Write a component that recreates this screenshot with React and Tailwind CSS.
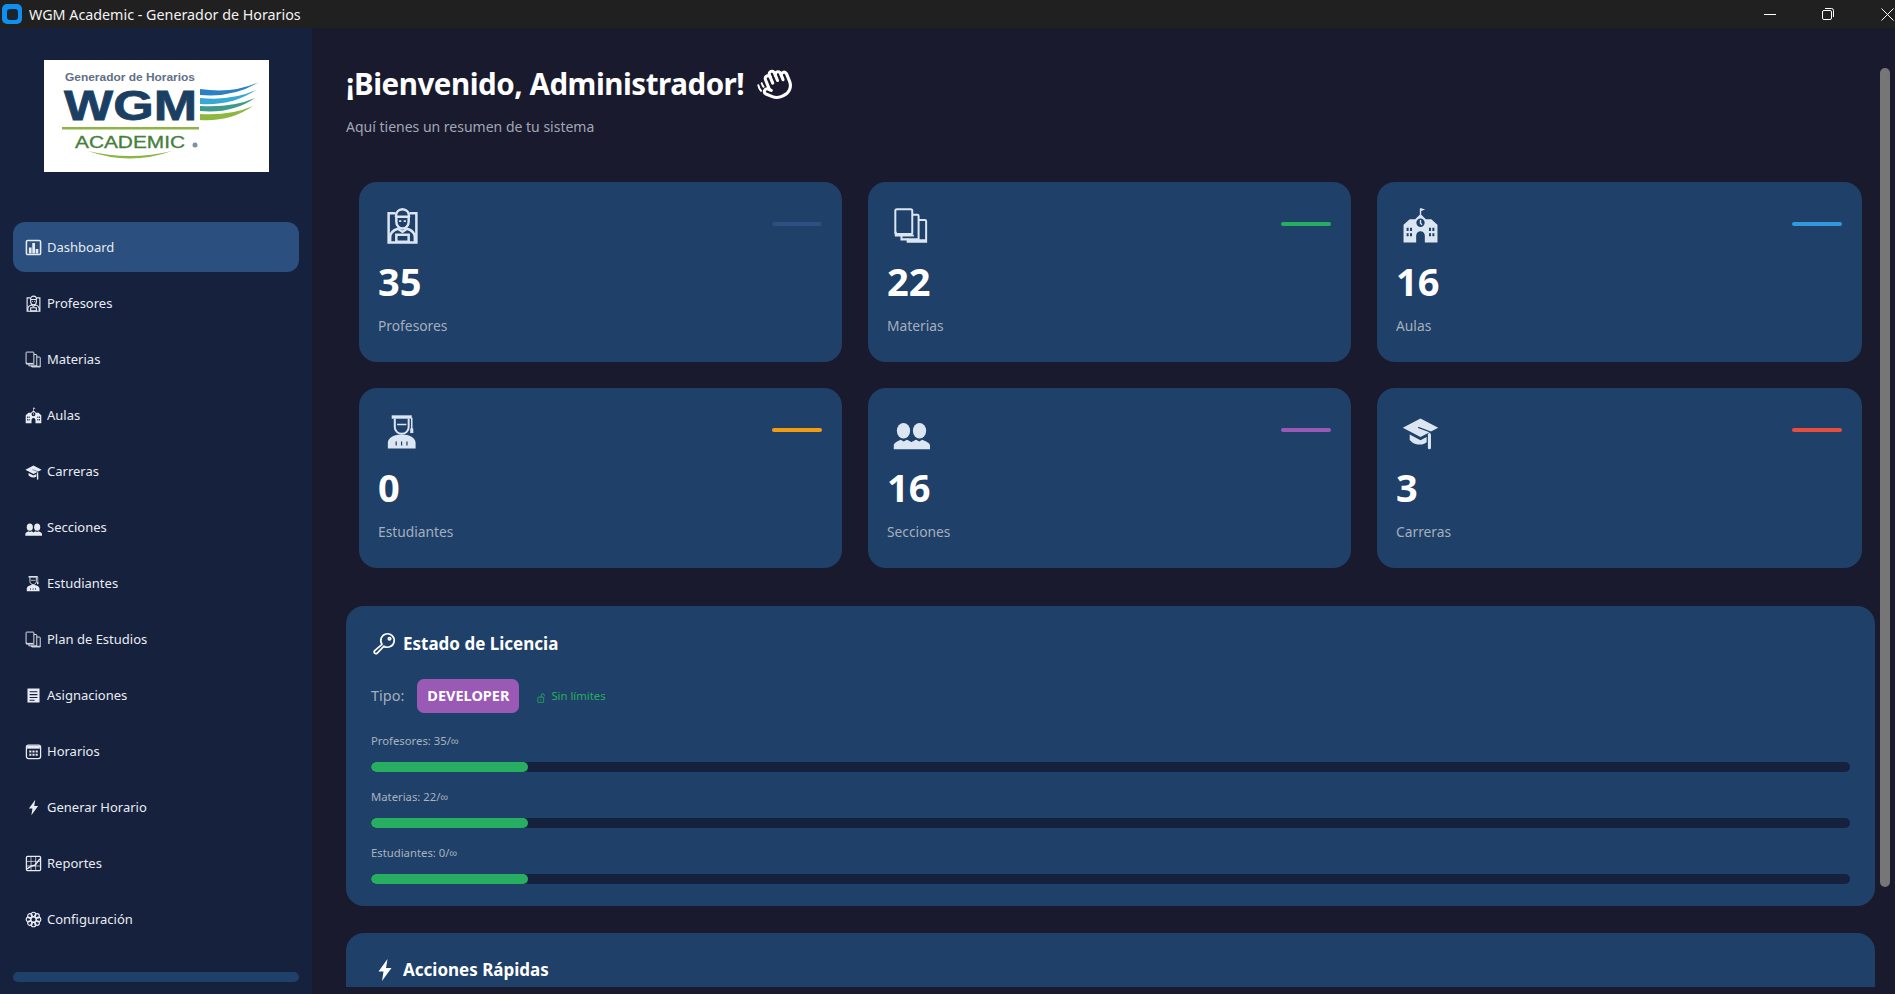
import React from 'react';

const Svg = ({ className, children }) => (
  <svg viewBox="0 0 24 24" fill="none" stroke="none" className={className}>{children}</svg>
);

const ChartIcon = ({ className }) => (
  <Svg className={className}>
    <rect x="2" y="2" width="20" height="20" rx="2" stroke="currentColor" strokeWidth="2.200" />
    <path fill="currentColor" d="M5.500 12h3.800v8.500H5.500zM10.300 5.500h3.800v15h-3.800zM15 14h3.800v6.500H15z" />
  </Svg>
);

const TeacherIcon = ({ className }) => (
  <Svg className={className}>
    <g stroke="currentColor" strokeWidth="1.600">
      <path d="M7.500 4H3v19h18V4h-4.500" />
      <path d="M7.700 6.500C7.700 3.500 9.500 1.500 12 1.500s4.300 2 4.300 5" />
      <path d="M7.700 6.300h8.600M8 6.500v3c0 2.500 1.800 4.400 4 4.400s4-1.900 4-4.400v-3" />
      <path d="M4 22.500v-3c0-3 2.500-4.600 5-5.400l3 2 3-2c2.500.8 5 2.400 5 5.400v3" />
      <path d="M8 18h8v4.500H8z" />
    </g>
    <path fill="currentColor" d="M9.800 8.600h1.400v1.100H9.800zM12.800 8.600h1.400v1.100h-1.400z" />
  </Svg>
);

const BooksIcon = ({ className }) => (
  <Svg className={className}>
    <g stroke="currentColor" strokeWidth="1.300">
      <rect x="1.500" y="1.500" width="11" height="16" rx="1" />
      <path d="M1.800 16v2.500h11.700M12.500 5h3.300c.5 0 .8.3.8.8V21H5.500v-2.500" />
      <path d="M16.600 8.500h4.100c.4 0 .8.3.8.8v13.200H9.500v-2M9.500 21.500h12" />
    </g>
  </Svg>
);

const SchoolIcon = ({ className }) => (
  <Svg className={className}>
    <path stroke="currentColor" strokeWidth="0.900" d="M12 5V1" />
    <path fill="currentColor" d="M12 .7l3 1-3 1.100z" />
    <path
      fill="currentColor"
      fillRule="evenodd"
      d="M1 11.500 5 8h3.500L12 4.500 15.500 8H19l4 3.500V23h-8.200v-4.500a2.800 2.800 0 0 0-5.600 0V23H1zM3 13.500v2h1.300v-2zM5.200 13.500v2h1.300v-2zM3 17v2h1.300v-2zM5.200 17v2h1.300v-2zM17.500 13.500v2h1.300v-2zM19.700 13.500v2H21v-2zM17.500 17v2h1.300v-2zM19.700 17v2H21v-2zM12 7.500a2.700 2.700 0 1 0 0 5.400 2.700 2.700 0 0 0 0-5.400z"
    />
    <path stroke="currentColor" strokeWidth="0.900" d="M12 8.500v2l1 1" />
  </Svg>
);

const CapIcon = ({ className }) => (
  <Svg className={className}>
    <path fill="currentColor" d="M12 3.500 23.500 9.500 12 15.500.5 9.500z" />
    <path fill="currentColor" d="M5 14l7 3.600 4-2.100v3.500c-1.300 1-2.500 1.500-4.500 1.500-3 0-5.500-1.600-6.500-3.200z" />
    <path stroke="currentColor" strokeWidth="2" strokeLinecap="round" d="M17.800 14v8.500" />
    <path stroke="#1f4068" strokeWidth="0.800" d="M10.500 9.300l8.700 3.300v4" />
  </Svg>
);

const PeopleIcon = ({ className }) => (
  <Svg className={className}>
    <ellipse cx="6.800" cy="11.500" rx="4.300" ry="5" fill="currentColor" />
    <ellipse cx="17.200" cy="11.500" rx="4.300" ry="5" fill="currentColor" />
    <path fill="currentColor" d="M.5 23.500v-2.500c0-1.800 3-3 4.500-3.700l2 1.200 2-1.200c1 .4 2.300 1 3 1.700.7-.7 2-1.300 3-1.700l2 1.200 2-1.200c1.500.7 5 1.900 5 3.700v2.500z" />
  </Svg>
);

const StudentIcon = ({ className }) => (
  <Svg className={className}>
    <path fill="currentColor" d="M5 1.500h13v2.200H5z" />
    <path stroke="currentColor" strokeWidth="1.300" d="M7 3.500v5.500c0 2.700 2 4.500 4.500 4.500S16 11.700 16 9V3.500" />
    <path stroke="currentColor" strokeWidth="1" d="M8.500 7.500h6M18 3v7.500" />
    <rect x="17" y="10" width="2" height="3" fill="currentColor" />
    <path
      fill="currentColor"
      fillRule="evenodd"
      d="M2.500 23v-3.500c0-3.500 4-5.500 9-5.500s9 2 9 5.500V23zM7.500 18.500V21h.8v-2.500zM11 18.500V21h.8v-2.500zM14.500 18.500V21h.8v-2.500z"
    />
  </Svg>
);

const ClipboardIcon = ({ className }) => (
  <Svg className={className}>
    <path
      fill="currentColor"
      fillRule="evenodd"
      d="M3.500 2h17v20h-17zM6.500 6v1.500h11V6zM6.500 10v1.500h11V10zM6.500 14v1.500h11V14zM6.500 18v1.500h7V18z"
    />
  </Svg>
);

const CalendarIcon = ({ className }) => (
  <Svg className={className}>
    <rect x="2" y="3" width="20" height="19" rx="3" stroke="currentColor" strokeWidth="1.800" />
    <path fill="currentColor" d="M3 4h18v4H3z" />
    <path fill="currentColor" d="M6 10.500h3v3H6zM10.500 10.500h3v3h-3zM15 10.500h3v3h-3zM6 15h3v3H6zM10.500 15h3v3h-3zM15 15h3v3h-3z" />
  </Svg>
);

const BoltIcon = ({ className }) => (
  <Svg className={className}>
    <path fill="currentColor" d="M14.500 1 5.500 13.500h5L9 23 18.500 10H13z" />
  </Svg>
);

const TrendIcon = ({ className }) => (
  <Svg className={className}>
    <rect x="2" y="2" width="20" height="20" rx="1.500" stroke="currentColor" strokeWidth="1.800" />
    <path stroke="currentColor" strokeWidth="1" d="M2 9h20M2 15.500h20M8.500 2v20M15 2v20" />
    <path stroke="currentColor" strokeWidth="2" d="M3 19.500l6-4 5-1 7-9" />
  </Svg>
);

const GearIcon = ({ className }) => (
  <Svg className={className}>
    <g stroke="currentColor" strokeWidth="1.600">
      <circle cx="12" cy="12" r="4" />
      <circle cx="12" cy="5" r="3.300" />
      <circle cx="12" cy="19" r="3.300" />
      <circle cx="5" cy="12" r="3.300" />
      <circle cx="19" cy="12" r="3.300" />
      <circle cx="7" cy="7" r="3.300" />
      <circle cx="17" cy="7" r="3.300" />
      <circle cx="7" cy="17" r="3.300" />
      <circle cx="17" cy="17" r="3.300" />
    </g>
  </Svg>
);

const KeyIcon = ({ className }) => (
  <Svg className={className}>
    <g stroke="currentColor" strokeWidth="1.700" strokeLinejoin="round">
      <path d="M10 12.300A6.700 6.700 0 1 1 12 14.200L5.500 20.800C4.500 21.800 3.300 21.800 2.600 21.200 2 20.500 2 19.300 3 18.300z" />
      <circle cx="17.500" cy="6.800" r="1.200" />
    </g>
  </Svg>
);

const LockIcon = ({ className }) => (
  <Svg className={className}>
    <g stroke="currentColor" strokeWidth="2">
      <rect x="2" y="10" width="14" height="12.500" rx="1" />
      <path d="M10 10V5.500a3.700 3.700 0 0 1 7.400 0V8M9 15v3" />
    </g>
  </Svg>
);

const WaveIcon = ({ className }) => (
  <svg viewBox="-2 -2 28 28" fill="none" stroke="currentColor" strokeWidth="2.300" strokeLinecap="round" strokeLinejoin="round" className={className}>
    <g transform="rotate(-22 12 12)">
      <path d="M18 11V6a2 2 0 0 0-2-2a2 2 0 0 0-2 2" />
      <path d="M14 10V4a2 2 0 0 0-2-2a2 2 0 0 0-2 2v2" />
      <path d="M10 10.500V6a2 2 0 0 0-2-2a2 2 0 0 0-2 2v8" />
      <path d="M18 8a2 2 0 1 1 4 0v6a8 8 0 0 1-8 8h-2c-2.800 0-4.500-.86-5.990-2.340l-3.600-3.600a2 2 0 0 1 2.830-2.820L7 15" />
    </g>
    <path strokeWidth="1.500" d="M-1 13c.3 1.500 1 2.800 2 4M1.500 11.500c.3 1 .7 1.800 1.300 2.500" />
  </svg>
);

const Logo = () => (
  <svg viewBox="0 0 225 112" className="h-[112px] w-[225px] bg-white">
    <text x="21" y="21" fontFamily="Liberation Sans, sans-serif" fontWeight="700" fontSize="11.500" fill="#5f7085" textLength="130" lengthAdjust="spacingAndGlyphs">Generador de Horarios</text>
    <text x="20" y="60" fontFamily="Liberation Sans, sans-serif" fontWeight="700" fontSize="43" fill="#1b3f63" stroke="#1b3f63" strokeWidth="0.800" textLength="133" lengthAdjust="spacingAndGlyphs">WGM</text>
    <path fill="#2a80c2" d="M156 29Q190 34 215 22Q190 38 156 35Z" />
    <path fill="#35a8d6" d="M156 38Q188 41 212 30Q188 46 156 44Z" />
    <path fill="#3f9a8c" d="M156 46Q188 48 211 38Q188 54 156 51Z" />
    <path fill="#8db83e" d="M156 54Q186 56 209 46Q186 62 156 60Z" />
    <rect x="18" y="67" width="137" height="2.500" fill="#8db544" />
    <text x="31" y="88" fontFamily="Liberation Sans, sans-serif" fontSize="17" fill="#43803a" stroke="#43803a" strokeWidth="0.300" textLength="110" lengthAdjust="spacingAndGlyphs">ACADEMIC</text>
    <circle cx="151" cy="85" r="2.500" fill="#7f90a4" />
    <path fill="#8db544" d="M44 91Q86 101 128 91Q86 106 44 91Z" />
  </svg>
);

const navItems = [
  { label: 'Dashboard', Icon: ChartIcon, active: true },
  { label: 'Profesores', Icon: TeacherIcon },
  { label: 'Materias', Icon: BooksIcon },
  { label: 'Aulas', Icon: SchoolIcon },
  { label: 'Carreras', Icon: CapIcon },
  { label: 'Secciones', Icon: PeopleIcon },
  { label: 'Estudiantes', Icon: StudentIcon },
  { label: 'Plan de Estudios', Icon: BooksIcon },
  { label: 'Asignaciones', Icon: ClipboardIcon },
  { label: 'Horarios', Icon: CalendarIcon },
  { label: 'Generar Horario', Icon: BoltIcon },
  { label: 'Reportes', Icon: TrendIcon },
  { label: 'Configuración', Icon: GearIcon },
];

const stats = [
  { value: '35', label: 'Profesores', Icon: TeacherIcon, bar: 'bg-[#2b4f7e]' },
  { value: '22', label: 'Materias', Icon: BooksIcon, bar: 'bg-[#27ae60]' },
  { value: '16', label: 'Aulas', Icon: SchoolIcon, bar: 'bg-[#3498db]' },
  { value: '0', label: 'Estudiantes', Icon: StudentIcon, bar: 'bg-[#f39c12]' },
  { value: '16', label: 'Secciones', Icon: PeopleIcon, bar: 'bg-[#9b59b6]' },
  { value: '3', label: 'Carreras', Icon: CapIcon, bar: 'bg-[#e74c3c]' },
];

const limits = ['Profesores: 35/∞', 'Materias: 22/∞', 'Estudiantes: 0/∞'];

const TitleBar = () => (
  <div className="flex h-[28px] shrink-0 items-center bg-[#202020] text-white">
    <div className="ml-[2px] flex h-[20px] w-[20px] items-center justify-center rounded-[5px] bg-[#0f8ff0]">
      <div className="h-[11px] w-[11px] rounded-[3px] bg-[#1c2430]" />
    </div>
    <span className="ml-[7px] mt-[1px] text-[14.300px] text-[#f2f2f2]">WGM Academic - Generador de Horarios</span>
    <div className="ml-auto flex items-center">
      <div className="h-px w-[12px] bg-white" />
      <svg viewBox="0 0 12 12" fill="none" stroke="currentColor" className="ml-[46px] h-[12px] w-[12px]">
        <rect x="0.500" y="2.500" width="9" height="9" rx="1.500" />
        <path d="M3 .5h6.500A2 2 0 0 1 11.500 2.500V9" />
      </svg>
      <svg viewBox="0 0 13 13" fill="none" stroke="currentColor" className="ml-[47px] mr-[1px] h-[13px] w-[13px]">
        <path d="M.5.5l12 12M12.500.5l-12 12" />
      </svg>
    </div>
  </div>
);

const Sidebar = () => (
  <aside className="flex w-[312px] shrink-0 flex-col bg-[#16213e]">
    <div className="ml-[44px] mt-[32px]">
      <Logo />
    </div>
    <nav className="mt-[50px] flex flex-col gap-[6px] px-[13px]">
      {navItems.map(({ label, Icon, active }) => (
        <div
          key={label}
          className={`flex h-[50px] items-center rounded-[12px] pl-[12px] text-[#e8ecf2] ${active ? 'bg-[#2b4f7e]' : ''}`}
        >
          <Icon className="h-[17px] w-[17px] shrink-0" />
          <span className="ml-[5px] mt-[1px] text-[13px]">{label}</span>
        </div>
      ))}
    </nav>
    <div className="mx-[13px] mt-[28px] h-[10px] rounded-[5px] bg-[#1f4068]" />
  </aside>
);

const StatCard = ({ value, label, Icon, bar }) => (
  <div className="relative h-[180px] rounded-[18px] bg-[#1f4068] pl-[19px] pt-[25px]">
    <Icon className="ml-[6px] h-[37px] w-[37px] text-[#dce6f2]" />
    <div className="mt-[11px] text-[38px] font-bold leading-[52px] text-white">{value}</div>
    <div className="mt-[7px] text-[13.800px] leading-[24px] text-[#a4afbd]">{label}</div>
    <div className={`absolute right-[20px] top-[40px] h-[4px] w-[50px] rounded-[2px] ${bar}`} />
  </div>
);

const LicensePanel = () => (
  <section className="mt-[38px] h-[300px] rounded-[18px] bg-[#1f4068] px-[25px] pt-[26px]">
    <div className="flex h-[24px] items-center">
      <KeyIcon className="ml-[1px] h-[24px] w-[24px] text-white" />
      <h2 className="ml-[7px] text-[17px] font-bold text-white">Estado de Licencia</h2>
    </div>
    <div className="mt-[23px] flex h-[34px] items-center">
      <span className="text-[14.500px] text-[#a4afbd]">Tipo:</span>
      <span className="ml-[13px] flex h-[34px] w-[102px] items-center justify-center rounded-[7px] bg-[#9b59b6] text-[14.500px] font-bold text-white">DEVELOPER</span>
      <LockIcon className="ml-[18px] mt-[3px] h-[10px] w-[10px] text-[#27ae60]" />
      <span className="ml-[4px] text-[11.300px] text-[#27ae60]">Sin límites</span>
    </div>
    <div className="mt-[18px] flex flex-col gap-[15px]">
      {limits.map((text) => (
        <div key={text}>
          <div className="h-[20px] text-[11.300px] leading-[20px] text-[#a8b2bf]">{text}</div>
          <div className="mt-[11px] h-[10px] overflow-hidden rounded-[5px] bg-[#16213e]">
            <div className="h-full w-[157px] rounded-[5px] bg-[#27ae60]" />
          </div>
        </div>
      ))}
    </div>
  </section>
);

export default function App() {
  return (
    <div className="flex h-screen flex-col overflow-hidden bg-[#1a1a2e] font-['Noto_Sans',sans-serif]">
      <TitleBar />
      <div className="flex min-h-0 flex-1">
        <Sidebar />
        <main className="min-w-0 flex-1 pl-[34px]">
          <div className="h-[959px] overflow-hidden pt-[36px]">
            <div className="flex h-[40px] items-center">
              <h1 className="text-[29.500px] font-bold leading-[40px] tracking-[-0.45px] text-white">¡Bienvenido, Administrador!</h1>
              <WaveIcon className="ml-[13px] h-[38px] w-[38px] text-white" />
            </div>
            <p className="mt-[11px] text-[14px] leading-[24px] text-[#a0a7b5]">Aquí tienes un resumen de tu sistema</p>
            <div className="mt-[43px] grid grid-cols-[483px_483px_1fr] gap-x-[26px] gap-y-[26px] px-[13px]">
              {stats.map((s) => (
                <StatCard key={s.label} {...s} />
              ))}
            </div>
            <LicensePanel />
            <section className="mt-[27px] h-[120px] rounded-[18px] bg-[#1f4068] pl-[25px] pt-[25px]">
              <div className="flex h-[24px] items-center">
                <BoltIcon className="ml-[2px] h-[24px] w-[24px] text-white" />
                <h2 className="ml-[6px] text-[17px] font-bold text-white">Acciones Rápidas</h2>
              </div>
            </section>
          </div>
        </main>
        <div className="mx-[5px] w-[10px] shrink-0 pt-[40px]">
          <div className="h-[819px] rounded-[5px] bg-[#767676]" />
        </div>
      </div>
    </div>
  );
}
